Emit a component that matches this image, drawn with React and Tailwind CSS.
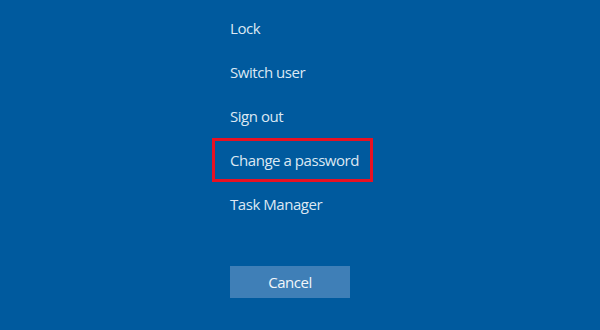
import React from 'react';

const items = ['Lock', 'Switch user', 'Sign out', 'Change a password', 'Task Manager'];

export default function App() {
  return (
    <div
      className="w-[600px] h-[330px] bg-[#005a9e] text-[#dce8f3] overflow-hidden"
      style={{ fontFamily: '"Open Sans", "Noto Sans", sans-serif' }}
    >
      <div className="ml-[212px] pt-[6px] flex flex-col">
        {items.map((label) => {
          const active = label === 'Change a password';
          return (
            <div
              key={label}
              className={
                active
                  ? 'h-[44px] w-[161px] flex items-center px-[15px] border-[3px] border-[#e81123] text-[15px] tracking-[-0.45px] whitespace-nowrap'
                  : 'h-[44px] flex items-center px-[18px] text-[15px] tracking-[-0.45px] whitespace-nowrap'
              }
            >
              {label}
            </div>
          );
        })}
        <button className="mt-[40px] ml-[18px] w-[120px] h-[32px] bg-[#3f7fb7] text-[#f2f6fa] text-[15px] tracking-[-0.45px] flex items-center justify-center">
          Cancel
        </button>
      </div>
    </div>
  );
}
